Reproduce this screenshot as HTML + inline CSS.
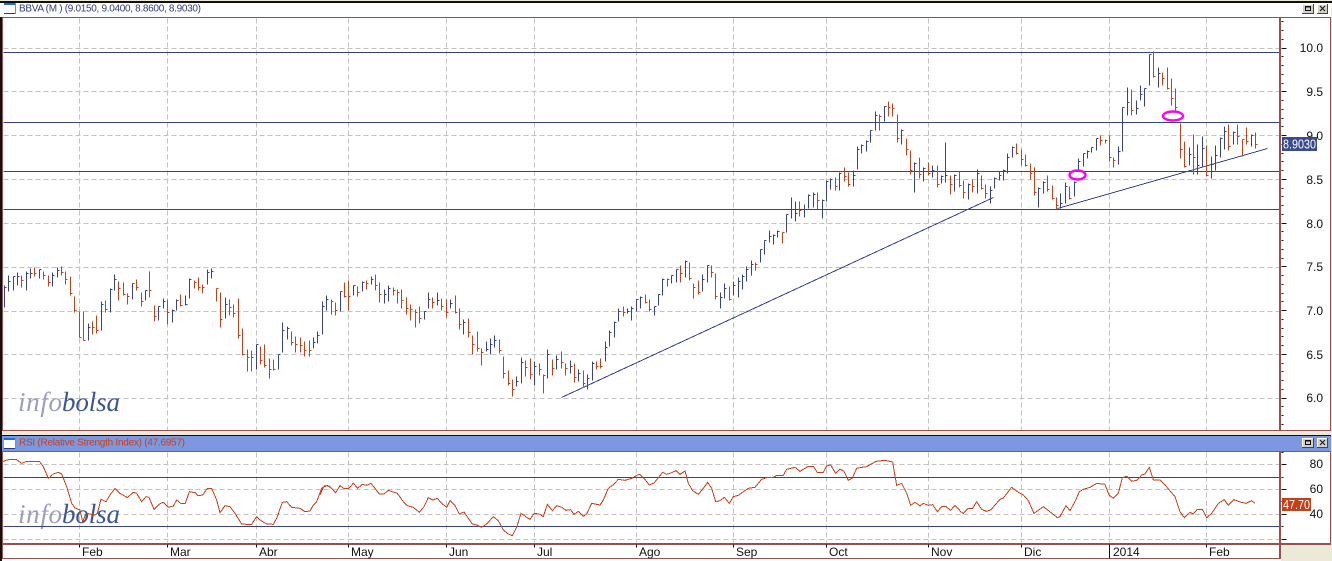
<!DOCTYPE html>
<html><head><meta charset="utf-8"><style>
html,body{margin:0;padding:0;background:#ece9d8;overflow:hidden}
svg{display:block}
text{font-family:"Liberation Sans",Arial,sans-serif}
.ax{font-size:12px;fill:#111}
.ay{font-size:12px;fill:#111;text-anchor:end}
</style></head><body>
<svg width="1332" height="561" viewBox="0 0 1332 561" xmlns="http://www.w3.org/2000/svg">
<rect width="1332" height="561" fill="#ece9d8"/>
<!-- top -->
<rect x="0" y="1" width="1332" height="2" fill="#111"/>
<rect x="0" y="3" width="1331" height="14" fill="#fff"/>
<!-- main chart -->
<rect x="2" y="17" width="1329" height="414" fill="#fff"/>
<!-- rsi -->
<rect x="0" y="435" width="1331" height="1" fill="#111"/>
<rect x="1" y="436" width="1330" height="15" fill="#7b98e0"/>
<rect x="2" y="451" width="1329" height="93" fill="#fff"/>
<rect x="0" y="544" width="1281" height="17" fill="#fff"/>
<!-- grids -->
<g shape-rendering="crispEdges" stroke="#c2c2c2" fill="none" stroke-dasharray="5 3" transform="translate(.5 .5)">
<path d="M3 48H1280M3 91H1280M3 135H1280M3 179H1280M3 223H1280M3 267H1280M3 311H1280M3 354H1280M3 398H1280"/>
<path d="M79 18V430M167 18V430M256 18V430M348 18V430M446 18V430M534 18V430M636 18V430M733 18V430M826 18V430M928 18V430M1021 18V430M1109 18V430M1206 18V430"/>
<path d="M3 464H1280M3 489H1280M3 514H1280M3 539H1280"/>
<path d="M79 452V542M167 452V542M256 452V542M348 452V542M446 452V542M534 452V542M636 452V542M733 452V542M826 452V542M928 452V542M1021 452V542M1109 452V542M1206 452V542"/>
</g>
<!-- watermark -->
<g font-size="27" font-style="italic">
<text x="18" y="411" fill="#9a9fc0" style="font-family:'Liberation Serif',serif" textLength="44" lengthAdjust="spacing">info</text>
<text x="62" y="411" fill="#3d5690" style="font-family:'Liberation Serif',serif" textLength="58" lengthAdjust="spacing">bolsa</text>
<text x="18" y="523" fill="#9a9fc0" style="font-family:'Liberation Serif',serif" textLength="44" lengthAdjust="spacing">info</text>
<text x="62" y="523" fill="#3d5690" style="font-family:'Liberation Serif',serif" textLength="58" lengthAdjust="spacing">bolsa</text>
</g>
<!-- blue horizontal + trend -->
<g stroke="#37418c" fill="none" shape-rendering="crispEdges" transform="translate(.5 .5)">
<path d="M3 52H1280M3 122H1280M3 171H1280M3 209H1280M3 477H1280M3 526H1280"/>
<path d="M561 397L993 197M1057 208L1267 148"/>
</g>
<!-- bars -->
<g fill="none" shape-rendering="crispEdges" transform="translate(.5 .5)">
<path stroke="#37418c" d="M4 285V307M4 287h2M8 275V291M8 281h2M13 276V290M13 276h2M17 272V285M17 276h2M26 271V290M26 273h2M30 268V278M30 273h2M39 269V278M39 269h2M52 272V286M52 275h2M57 267V277M57 270h2M88 323V340M88 327h2M101 301V330M101 304h2M110 288V312M110 289h2M114 274V290M114 279h2M132 283V299M132 283h2M145 290V300M145 290h2M158 306V320M158 306h2M163 298V308M163 301h2M172 309V322M172 310h2M176 299V310M176 300h2M185 295V305M185 304h2M189 278V298M189 279h2M207 269V284M207 272h2M211 268V278M211 271h2M225 297V318M225 304h2M256 344V369M256 344h2M278 354V369M278 354h2M282 322V352M282 330h2M287 326V339M287 328h2M313 337V348M313 342h2M317 331V343M317 335h2M322 301V334M322 306h2M326 295V310M326 299h2M340 291V311M340 291h2M353 285V295M353 285h2M362 281V291M362 282h2M371 276V284M371 279h2M384 289V303M384 294h2M388 285V301M388 288h2M424 311V319M424 311h2M428 292V308M428 299h2M437 292V305M437 300h2M450 299V308M450 303h2M463 319V334M463 322h2M486 341V351M486 349h2M490 338V354M490 344h2M494 335V347M494 340h2M516 376V386M516 381h2M521 357V383M521 362h2M534 361V385M534 366h2M547 349V378M547 354h2M556 355V369M556 359h2M570 360V373M570 366h2M578 369V381M578 373h2M587 374V389M587 378h2M592 361V380M592 363h2M605 341V361M605 347h2M609 330V346M609 332h2M614 321V337M614 322h2M618 308V321M618 311h2M627 308V313M627 311h2M631 306V320M631 308h2M636 299V311M636 299h2M640 296V308M640 297h2M654 306V315M654 306h2M658 294V305M658 294h2M662 278V295M662 279h2M671 275V283M671 275h2M676 269V282M676 269h2M685 260V277M685 261h2M702 274V291M702 279h2M707 265V282M707 265h2M720 292V308M720 297h2M724 283V298M724 288h2M733 281V295M733 285h2M738 277V297M738 281h2M742 274V289M742 276h2M746 266V281M746 269h2M751 260V275M751 264h2M760 249V262M760 249h2M764 240V254M764 240h2M769 230V242M769 236h2M773 234V244M773 235h2M777 230V237M777 231h2M786 214V232M786 214h2M791 197V218M791 209h2M795 201V221M795 213h2M804 204V217M804 209h2M808 194V208M808 195h2M813 192V207M813 194h2M822 199V218M822 200h2M826 180V201M826 181h2M830 178V189M830 179h2M839 172V190M839 173h2M853 170V186M853 175h2M857 146V169M857 149h2M861 144V153M861 145h2M866 140V151M866 141h2M870 130V142M870 130h2M875 111V130M875 115h2M884 106V121M884 106h2M901 129V144M901 130h2M914 162V192M914 163h2M923 167V181M923 168h2M932 165V177M932 170h2M941 175V183M941 176h2M945 142V182M945 175h2M954 174V191M954 175h2M968 183V199M968 184h2M977 169V193M977 173h2M990 186V203M990 190h2M994 177V188M994 178h2M999 171V180M999 175h2M1003 169V180M1003 170h2M1007 153V173M1007 157h2M1012 146V157M1012 147h2M1038 187V207M1038 188h2M1043 181V193M1043 182h2M1060 193V208M1060 203h2M1065 182V203M1065 186h2M1074 181V196M1074 182h2M1078 158V170M1078 161h2M1083 153V166M1083 153h2M1087 150V158M1087 151h2M1091 147V152M1091 147h2M1096 138V150M1096 138h2M1118 146V164M1118 151h2M1122 107V151M1122 107h2M1127 87V115M1127 102h2M1136 100V114M1136 108h2M1140 85V100M1140 94h2M1144 88V106M1144 88h2M1149 54V85M1149 54h2M1158 67V87M1158 73h2M1189 147V165M1189 154h2M1197 144V174M1197 165h2M1202 136V166M1202 148h2M1211 156V178M1211 164h2M1215 145V170M1215 155h2M1220 137V157M1220 138h2M1224 126V149M1224 131h2M1233 131V144M1233 132h2M1251 134V146M1251 135h2"/>
<path stroke="#c93f17" d="M21 275V287M21 280h2M34 267V276M34 273h2M43 271V279M43 275h2M48 275V286M48 282h2M61 266V275M61 272h2M65 271V284M65 279h2M70 276V295M70 293h2M74 296V312M74 310h2M79 311V337M79 337h2M83 311V340M83 340h2M92 321V334M92 327h2M96 315V333M96 330h2M105 300V312M105 309h2M118 281V300M118 288h2M123 282V295M123 294h2M127 293V304M127 296h2M136 279V290M136 287h2M141 292V306M141 301h2M149 271V297M149 290h2M154 305V321M154 316h2M167 299V324M167 312h2M180 294V306M180 305h2M194 280V288M194 282h2M198 277V290M198 287h2M202 284V293M202 287h2M216 288V301M216 288h2M220 292V327M220 319h2M229 299V315M229 307h2M233 304V317M233 313h2M238 298V338M238 335h2M242 328V355M242 354h2M247 349V371M247 357h2M251 350V371M251 357h2M260 346V364M260 360h2M264 344V367M264 365h2M269 358V378M269 369h2M273 359V370M273 369h2M291 331V345M291 342h2M295 336V352M295 344h2M300 337V352M300 345h2M304 341V356M304 350h2M309 340V356M309 350h2M331 299V314M331 301h2M335 302V315M335 310h2M344 282V297M344 296h2M348 280V310M348 296h2M357 286V296M357 292h2M366 280V289M366 283h2M375 274V290M375 285h2M379 282V302M379 294h2M393 287V295M393 290h2M397 289V303M397 292h2M401 289V308M401 300h2M406 297V314M406 308h2M410 304V320M410 309h2M415 309V327M415 312h2M419 306V323M419 318h2M432 297V308M432 302h2M441 298V310M441 306h2M446 299V317M446 312h2M455 295V313M455 312h2M459 308V329M459 324h2M468 318V337M468 332h2M472 335V354M472 344h2M477 331V351M477 348h2M481 348V365M481 352h2M499 339V353M499 350h2M503 356V378M503 373h2M508 370V385M508 383h2M512 379V396M512 389h2M525 360V376M525 367h2M530 358V379M530 374h2M539 363V375M539 369h2M543 374V393M543 375h2M552 359V375M552 368h2M561 351V368M561 362h2M565 363V375M565 368h2M574 363V382M574 377h2M583 370V386M583 383h2M596 361V369M596 366h2M600 358V368M600 366h2M623 306V316M623 312h2M645 294V303M645 302h2M649 299V311M649 309h2M667 278V286M667 279h2M680 265V282M680 273h2M689 262V280M689 278h2M693 283V298M693 287h2M698 280V294M698 292h2M711 265V277M711 272h2M715 273V299M715 296h2M729 286V300M729 299h2M755 262V270M755 264h2M782 232V243M782 232h2M799 201V216M799 210h2M817 192V209M817 200h2M835 177V190M835 186h2M844 167V181M844 176h2M848 172V186M848 184h2M879 114V130M879 116h2M888 101V116M888 107h2M892 103V116M892 108h2M897 114V142M897 138h2M906 138V155M906 149h2M910 150V174M910 170h2M919 157V178M919 174h2M928 162V175M928 173h2M937 165V187M937 184h2M950 175V194M950 184h2M959 171V187M959 185h2M963 180V198M963 192h2M972 179V192M972 186h2M981 175V189M981 188h2M985 184V198M985 193h2M1016 143V154M1016 153h2M1021 149V165M1021 159h2M1025 154V166M1025 165h2M1030 163V179M1030 173h2M1034 167V195M1034 192h2M1047 175V191M1047 189h2M1052 185V199M1052 198h2M1056 197V209M1056 205h2M1069 186V199M1069 198h2M1100 135V145M1100 140h2M1105 139V143M1105 140h2M1109 135V161M1109 157h2M1113 157V167M1113 160h2M1131 89V115M1131 110h2M1153 51V77M1153 76h2M1162 72V85M1162 78h2M1167 67V89M1167 88h2M1171 78V105M1171 98h2M1175 88V111M1175 107h2M1180 123V158M1180 149h2M1184 141V167M1184 166h2M1193 134V174M1193 157h2M1206 145V176M1206 175h2M1228 124V150M1228 146h2M1237 124V144M1237 136h2M1242 139V156M1242 139h2M1246 127V144M1246 141h2M1255 132V148M1255 144h2"/>
</g>
<!-- ellipses -->
<ellipse cx="1077.5" cy="175" rx="8" ry="4.5" fill="none" stroke="#ff00f0" stroke-width="2.4"/>
<ellipse cx="1173" cy="116" rx="10" ry="4.5" fill="none" stroke="#ff00f0" stroke-width="2.4"/>
<!-- RSI line -->
<g fill="none" stroke="#c93f17" shape-rendering="crispEdges">
<polyline transform="translate(0 380) scale(.33333)" vector-effect="non-scaling-stroke" stroke-width="1" points="8,245 20,240 35,238 50,239 65,250 80,244 100,244 118,244 130,260 145,295 160,282 175,277 185,282 200,320 215,370 225,384 240,390 248,425 258,400 285,405 292,400 303,358 318,365 330,345 345,325 360,340 382,353 400,337 410,340 425,365 438,350 447,352 462,388 478,372 490,367 505,382 520,378 530,360 542,370 556,370 568,335 585,338 595,347 608,345 622,325 635,325 650,360 660,398 675,377 690,380 705,400 725,432 740,433 755,433 770,410 780,420 800,432 820,433 830,415 847,367 860,365 875,382 900,385 915,395 930,393 940,375 950,365 965,325 975,317 990,319"/>
<polyline transform="translate(320 450) scale(.33333)" vector-effect="non-scaling-stroke" stroke-width="1" points="0,135 10,112 22,106 35,115 47,128 60,107 72,116 85,116 100,100 113,115 127,103 140,106 153,100 165,115 178,132 192,132 205,121 220,126 232,130 250,155 262,167 280,172 298,187 312,170 325,143 338,150 352,145 365,160 380,172 390,152 405,167 418,192 432,186 445,205 457,222 470,225 485,232 500,222 520,200 535,212 550,240 565,252 577,257 590,232 603,190 620,202 630,208 643,190 660,193 670,200 682,163 697,182 710,167 725,172 738,181 752,179 762,193 775,184 790,199 800,192 815,160 840,165 850,150 865,115 880,104 895,88 915,91 935,85 950,76 960,73"/>
<polyline transform="translate(640 450) scale(.33333)" vector-effect="non-scaling-stroke" stroke-width="1" points="0,73 12,85 28,105 42,99 68,67 80,73 95,68 108,62 120,73 135,63 145,100 158,122 175,133 190,115 203,97 215,115 227,155 240,152 253,142 268,160 280,140 295,136 310,125 325,115 345,112 365,88 380,83 400,82 410,76 430,76 440,58 465,52 480,64 505,49 520,49 532,67 550,67 560,48 572,45 587,70 600,57 612,64 625,91 637,84 650,55 665,52 680,50 708,34 735,31 758,36 770,106 785,100 800,130 812,166 825,157 840,168 850,160 865,166 878,164 892,185 905,170 918,170 932,181 945,166 960,182"/>
<polyline transform="translate(960 450) scale(.33333)" vector-effect="non-scaling-stroke" stroke-width="1" points="0,184 10,190 25,175 38,175 50,155 65,178 78,184 92,180 120,148 130,144 155,112 175,127 190,135 205,152 222,190 250,170 272,187 292,203 300,200 318,167 330,182 345,155 358,125 370,118 390,112 410,100 435,103 447,135 460,145 475,130 487,83 500,79 515,94 530,91 545,75 555,72 568,52 580,90 600,90 615,105 645,140 660,185 673,203 690,187 700,192 712,178 727,178 740,203 755,190 775,160 793,149 805,166 822,149 840,156 858,160 875,152 885,160"/>
</g>
<!-- frames -->
<g fill="#9c4f4f" shape-rendering="crispEdges">
<rect x="2" y="17" width="1329" height="1"/>
<rect x="2" y="430" width="1329" height="1"/>
<rect x="2" y="17" width="1" height="414"/>
<rect x="1279" y="17" width="2" height="414"/>
<rect x="1330" y="17" width="1" height="414"/>
<rect x="2" y="451" width="1329" height="1"/>
<rect x="1279" y="451" width="2" height="108"/>
<rect x="1330" y="451" width="1" height="93"/>
<rect x="2" y="543" width="1329" height="2"/>
<rect x="2" y="558" width="1279" height="1"/>
<rect x="2" y="451" width="1" height="108"/>
</g>
<rect x="0" y="17" width="2" height="544" fill="#111"/>
<!-- y ticks -->
<g stroke="#111" fill="none" shape-rendering="crispEdges" transform="translate(.5 .5)">
<path d="M1281 48h5M1281 91h5M1281 135h5M1281 179h5M1281 223h5M1281 266h5M1281 310h5M1281 354h5M1281 398h5"/>
<path d="M1281 21h2M1281 30h2M1281 39h2M1281 56h2M1281 65h2M1281 74h2M1281 83h2M1281 100h2M1281 109h2M1281 118h2M1281 126h2M1281 144h2M1281 153h2M1281 161h2M1281 170h2M1281 188h2M1281 196h2M1281 205h2M1281 214h2M1281 231h2M1281 240h2M1281 249h2M1281 258h2M1281 275h2M1281 284h2M1281 293h2M1281 301h2M1281 319h2M1281 328h2M1281 336h2M1281 345h2M1281 363h2M1281 371h2M1281 380h2M1281 389h2M1281 406h2M1281 415h2M1281 424h2"/>
<path d="M1281 464h5M1281 489h5M1281 514h5M1281 539h5M1281 452h2M1281 477h2M1281 501h2M1281 526h2"/>
<path d="M79 544v3M167 544v3M256 544v3M348 544v3M446 544v3M534 544v3M636 544v3M733 544v3M826 544v3M928 544v3M1021 544v3M1109 544v14M1206 544v3"/>
</g>
<!-- y labels -->
<g class="ay">
<text class="ay" x="1323" y="52">10.0</text>
<text class="ay" x="1323" y="96">9.5</text>
<text class="ay" x="1323" y="140">9.0</text>
<text class="ay" x="1323" y="184">8.5</text>
<text class="ay" x="1323" y="228">8.0</text>
<text class="ay" x="1323" y="271">7.5</text>
<text class="ay" x="1323" y="315">7.0</text>
<text class="ay" x="1323" y="359">6.5</text>
<text class="ay" x="1323" y="402">6.0</text>
<text class="ay" x="1323" y="468">80</text>
<text class="ay" x="1323" y="493">60</text>
<text class="ay" x="1323" y="518">40</text>
</g>
<!-- tags -->
<rect x="1282" y="137" width="35" height="14" fill="#3b4a8c"/>
<text x="1283" y="148.5" font-size="13" fill="#fff" textLength="33" lengthAdjust="spacingAndGlyphs">8.9030</text>
<rect x="1282" y="498" width="29" height="13" fill="#c6401a"/>
<text x="1283" y="509" font-size="13" fill="#fff" textLength="27" lengthAdjust="spacingAndGlyphs">47.70</text>
<!-- x labels -->
<text class="ax" x="82" y="556">Feb</text>
<text class="ax" x="170" y="556">Mar</text>
<text class="ax" x="259" y="556">Abr</text>
<text class="ax" x="351" y="556">May</text>
<text class="ax" x="449" y="556">Jun</text>
<text class="ax" x="537" y="556">Jul</text>
<text class="ax" x="639" y="556">Ago</text>
<text class="ax" x="736" y="556">Sep</text>
<text class="ax" x="829" y="556">Oct</text>
<text class="ax" x="931" y="556">Nov</text>
<text class="ax" x="1024" y="556">Dic</text>
<text class="ax" x="1113" y="556">2014</text>
<text class="ax" x="1209" y="556">Feb</text>
<!-- titles -->
<text x="19" y="11.5" font-size="10" fill="#2f3a80" textLength="182" lengthAdjust="spacing">BBVA (M ) (9.0150, 9.0400, 8.8600, 8.9030)</text>
<text x="19" y="445.5" font-size="10" fill="#c93f17" textLength="166" lengthAdjust="spacing">RSI (Relative Strength Index) (47.6957)</text>
<!-- window icons -->
<g shape-rendering="crispEdges">
<rect x="4" y="3" width="12" height="11" fill="#fff"/>
<rect x="4" y="3" width="12" height="2" fill="#1f6fd0"/>
<rect x="4" y="13" width="12" height="1" fill="#2a3a90"/>
<rect x="15" y="3" width="1" height="11" fill="#6f8fd0"/>
<rect x="4" y="438" width="12" height="11" fill="#fff"/>
<rect x="4" y="438" width="12" height="2" fill="#1f6fd0"/>
<rect x="4" y="448" width="12" height="1" fill="#2a3a90"/>
<rect x="15" y="438" width="1" height="11" fill="#6f8fd0"/>
</g>
<!-- buttons -->
<g shape-rendering="crispEdges" fill="none">
<g>
<rect x="1302" y="4" width="11" height="9" fill="#d4d0c8"/>
<path d="M1302 4.5h11M1302.5 4v9" stroke="#fff"/>
<path d="M1302 13.5h12M1313.5 4v10" stroke="#444"/>
<path d="M1305 7h6M1305 6.5h6" stroke="#111"/>
<rect x="1305.5" y="6.5" width="5" height="4" stroke="#111"/>
<rect x="1317" y="4" width="10" height="9" fill="#d4d0c8"/>
<path d="M1317 4.5h10M1317.5 4v9" stroke="#fff"/>
<path d="M1317 13.5h11M1327.5 4v10" stroke="#444"/>
<path d="M1320 6l5 5M1325 6l-5 5" stroke="#111" shape-rendering="auto"/>
</g>
<g>
<rect x="1302" y="438" width="11" height="9" fill="#d4d0c8"/>
<path d="M1302 438.5h11M1302.5 438v9" stroke="#fff"/>
<path d="M1302 447.5h12M1313.5 438v10" stroke="#444"/>
<path d="M1305 441h6M1305 440.5h6" stroke="#111"/>
<rect x="1305.5" y="440.5" width="5" height="4" stroke="#111"/>
<rect x="1317" y="438" width="10" height="9" fill="#d4d0c8"/>
<path d="M1317 438.5h10M1317.5 438v9" stroke="#fff"/>
<path d="M1317 447.5h11M1327.5 438v10" stroke="#444"/>
<path d="M1320 440l5 5M1325 440l-5 5" stroke="#111" shape-rendering="auto"/>
</g>
</g>
</svg>
</body></html>
